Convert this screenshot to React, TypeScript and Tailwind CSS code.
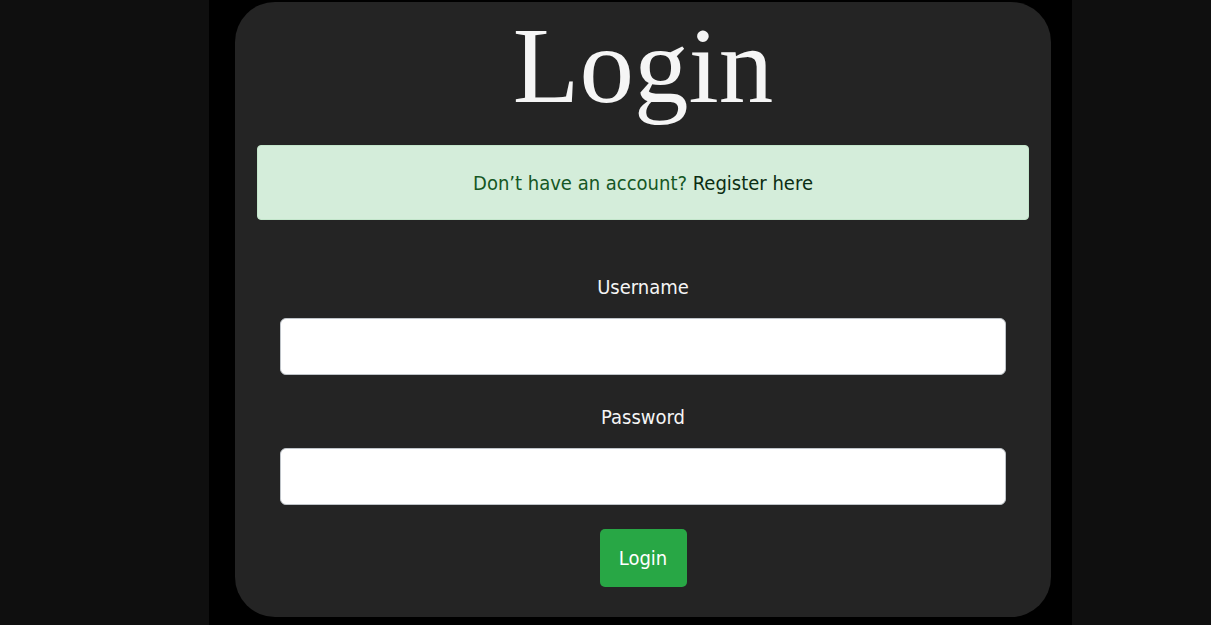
import React from "react";

const cond = { fontFamily: '"DejaVu Sans Condensed", "DejaVu Sans", sans-serif', fontStretch: "condensed" as const };

export default function App() {
  return (
    <div className="w-full h-[625px] bg-[#0f0f0f] flex overflow-hidden pl-[209px]">
      <div className="w-[863px] h-full bg-black pl-[26px] pr-[21px] pt-[2px]">
        <div className="w-[816px] h-[615px] bg-[#242424] rounded-[40px] flex flex-col items-center px-[22px]">
          <h1
            className="text-[109px] leading-none text-[#f5f5f5] mt-[9px] h-[134px]"
            style={{ fontFamily: '"Liberation Serif", "Times New Roman", serif' }}
          >
            Login
          </h1>
          <div
            className="w-full h-[75px] bg-[#d4edda] border border-[#c3e6cb] rounded-[4px] flex items-center justify-center text-[20px] text-[#155724]"
            style={cond}
          >
            <span>
              Don’t have an account? <a className="text-[#0b2e13]">Register here</a>
            </span>
          </div>
          <div className="w-full flex flex-col items-center px-[23px] mt-[52px]" style={cond}>
            <label className="text-[20px] text-[#f5f5f5] leading-[30px]">Username</label>
            <input className="mt-[16px] w-full h-[57px] bg-white border border-[#bfc4c9] rounded-[6px]" />
            <label className="mt-[27px] text-[20px] text-[#f5f5f5] leading-[30px]">Password</label>
            <input type="password" className="mt-[16px] w-full h-[57px] bg-white border border-[#bfc4c9] rounded-[6px]" />
            <button className="mt-[24px] w-[87px] h-[58px] bg-[#28a745] rounded-[5px] text-white text-[20px]">
              Login
            </button>
          </div>
        </div>
      </div>
    </div>
  );
}
